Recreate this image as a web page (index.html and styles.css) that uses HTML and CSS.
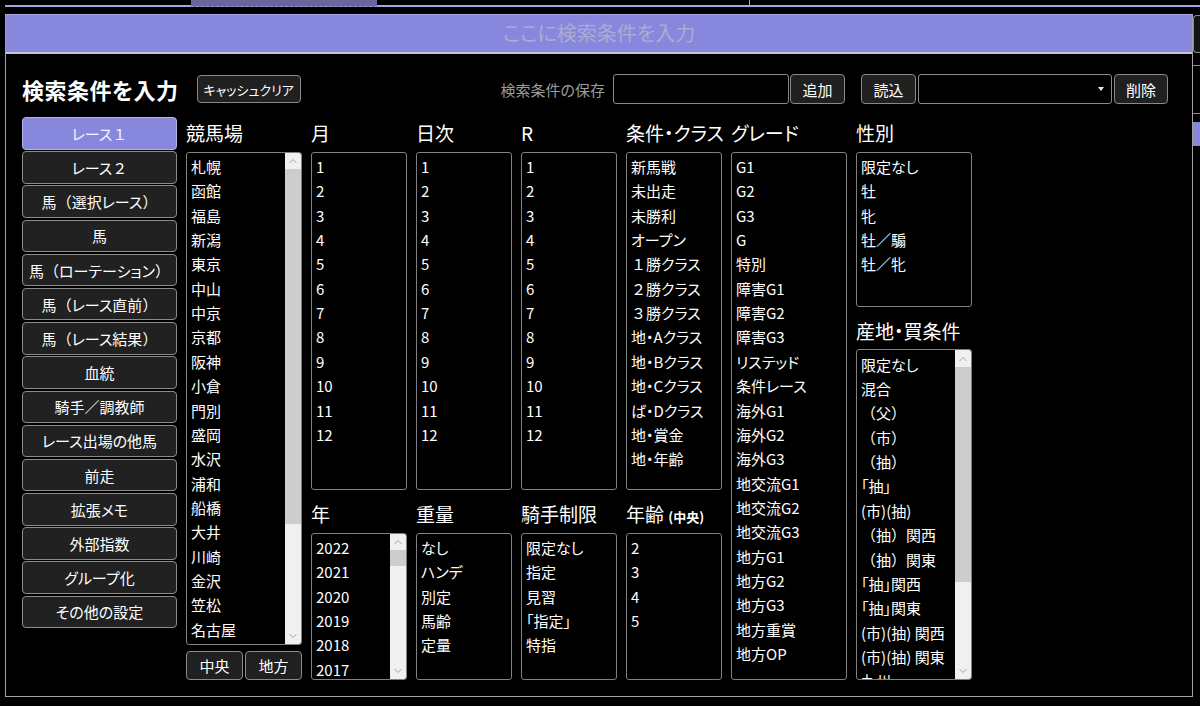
FILE: index.html
```html
<!DOCTYPE html>
<html lang="ja">
<head>
<meta charset="utf-8">
<title>検索条件を入力</title>
<link rel="stylesheet" href="styles.css">
</head>
<body>
<div class="topbar">
  <div class="tl tl-a"></div>
  <div class="tab"></div>
  <div class="tl tl-b"></div>
  <div class="tick"></div>
  <div class="tl tl-c"></div>
</div>
<div class="workspace">
  <div class="panel">
    <div class="searchbar">ここに検索条件を入力</div>
    <div class="toolbar">
      <h1 class="title">検索条件を入力</h1>
      <div class="btn btn-cache">キャッシュクリア</div>
      <div class="spacer"></div>
      <span class="save-label">検索条件の保存</span>
      <div class="input"></div>
      <div class="btn btn-add">追加</div>
      <div class="btn btn-load">読込</div>
      <div class="select"><span class="caret"></span></div>
      <div class="btn btn-del">削除</div>
    </div>
    <div class="content">
      <div class="nav">
        <div class="navbtn active">レース<span class="fw">１</span></div>
        <div class="navbtn">レース<span class="fw">２</span></div>
        <div class="navbtn">馬<span class="fw">（</span>選択レース<span class="fw">）</span></div>
        <div class="navbtn">馬</div>
        <div class="navbtn">馬<span class="fw">（</span>ローテーション<span class="fw">）</span></div>
        <div class="navbtn">馬<span class="fw">（</span>レース直前<span class="fw">）</span></div>
        <div class="navbtn">馬<span class="fw">（</span>レース結果<span class="fw">）</span></div>
        <div class="navbtn">血統</div>
        <div class="navbtn">騎手<span class="fw">／</span>調教師</div>
        <div class="navbtn">レース出場の他馬</div>
        <div class="navbtn">前走</div>
        <div class="navbtn">拡張メモ</div>
        <div class="navbtn">外部指数</div>
        <div class="navbtn">グループ化</div>
        <div class="navbtn">その他の設定</div>
      </div>

      <div class="col w116">
        <div class="lbl">競馬場</div>
        <div class="list h-venue">
          <div class="items">
            <div>札幌</div><div>函館</div><div>福島</div><div>新潟</div><div>東京</div>
            <div>中山</div><div>中京</div><div>京都</div><div>阪神</div><div>小倉</div>
            <div>門別</div><div>盛岡</div><div>水沢</div><div>浦和</div><div>船橋</div>
            <div>大井</div><div>川崎</div><div>金沢</div><div>笠松</div><div>名古屋</div>
          </div>
          <div class="sb">
            <div class="sb-arrow"><svg width="8" height="6" viewBox="0 0 8 6"><polyline points="0.5,5 4,1.5 7.5,5" fill="none" stroke="#a3a3a3" stroke-width="1"/></svg></div>
            <div class="sb-thumb th-venue"></div>
            <div class="sb-track"></div>
            <div class="sb-arrow"><svg width="8" height="6" viewBox="0 0 8 6"><polyline points="0.5,1 4,4.5 7.5,1" fill="none" stroke="#a3a3a3" stroke-width="1"/></svg></div>
          </div>
        </div>
        <div class="pair">
          <div class="btn pbtn">中央</div>
          <div class="btn pbtn">地方</div>
        </div>
      </div>

      <div class="col w96">
        <div class="lbl">月</div>
        <div class="list h-top">
          <div class="items">
            <div>1</div><div>2</div><div>3</div><div>4</div><div>5</div><div>6</div>
            <div>7</div><div>8</div><div>9</div><div>10</div><div>11</div><div>12</div>
          </div>
        </div>
        <div class="lbl lbl2">年</div>
        <div class="list h-bot">
          <div class="items">
            <div>2022</div><div>2021</div><div>2020</div><div>2019</div><div>2018</div><div>2017</div>
          </div>
          <div class="sb">
            <div class="sb-arrow"><svg width="8" height="6" viewBox="0 0 8 6"><polyline points="0.5,5 4,1.5 7.5,5" fill="none" stroke="#a3a3a3" stroke-width="1"/></svg></div>
            <div class="sb-thumb th-year"></div>
            <div class="sb-track"></div>
            <div class="sb-arrow"><svg width="8" height="6" viewBox="0 0 8 6"><polyline points="0.5,1 4,4.5 7.5,1" fill="none" stroke="#a3a3a3" stroke-width="1"/></svg></div>
          </div>
        </div>
      </div>

      <div class="col w96">
        <div class="lbl">日次</div>
        <div class="list h-top">
          <div class="items">
            <div>1</div><div>2</div><div>3</div><div>4</div><div>5</div><div>6</div>
            <div>7</div><div>8</div><div>9</div><div>10</div><div>11</div><div>12</div>
          </div>
        </div>
        <div class="lbl lbl2">重量</div>
        <div class="list h-bot">
          <div class="items">
            <div>なし</div><div>ハンデ</div><div>別定</div><div>馬齢</div><div>定量</div>
          </div>
        </div>
      </div>

      <div class="col w96">
        <div class="lbl">R</div>
        <div class="list h-top">
          <div class="items">
            <div>1</div><div>2</div><div>3</div><div>4</div><div>5</div><div>6</div>
            <div>7</div><div>8</div><div>9</div><div>10</div><div>11</div><div>12</div>
          </div>
        </div>
        <div class="lbl lbl2">騎手制限</div>
        <div class="list h-bot">
          <div class="items">
            <div>限定なし</div><div>指定</div><div>見習</div><div>「指定」</div><div>特指</div>
          </div>
        </div>
      </div>

      <div class="col w96">
        <div class="lbl">条件・クラス</div>
        <div class="list h-top">
          <div class="items">
            <div>新馬戦</div><div>未出走</div><div>未勝利</div><div>オープン</div>
            <div><span class="fw">１</span>勝クラス</div><div><span class="fw">２</span>勝クラス</div><div><span class="fw">３</span>勝クラス</div>
            <div>地・Aクラス</div><div>地・Bクラス</div><div>地・Cクラス</div><div>ば・Dクラス</div>
            <div>地・賞金</div><div>地・年齢</div>
          </div>
        </div>
        <div class="lbl lbl2">年齢 <small class="sub">(中央)</small></div>
        <div class="list h-bot">
          <div class="items">
            <div>2</div><div>3</div><div>4</div><div>5</div>
          </div>
        </div>
      </div>

      <div class="col w116">
        <div class="lbl">グレード</div>
        <div class="list h-grade">
          <div class="items">
            <div>G1</div><div>G2</div><div>G3</div><div>G</div><div>特別</div>
            <div>障害G1</div><div>障害G2</div><div>障害G3</div><div>リステッド</div><div>条件レース</div>
            <div>海外G1</div><div>海外G2</div><div>海外G3</div><div>地交流G1</div><div>地交流G2</div>
            <div>地交流G3</div><div>地方G1</div><div>地方G2</div><div>地方G3</div><div>地方重賞</div>
            <div>地方OP</div>
          </div>
        </div>
      </div>

      <div class="col w116">
        <div class="lbl">性別</div>
        <div class="list h-sex">
          <div class="items">
            <div>限定なし</div><div>牡</div><div>牝</div>
            <div>牡<span class="fw">／</span>騸</div><div>牡<span class="fw">／</span>牝</div>
          </div>
        </div>
        <div class="lbl lbl2">産地・買条件</div>
        <div class="list h-origin">
          <div class="items">
            <div>限定なし</div><div>混合</div>
            <div><span class="fw">（</span>父<span class="fw">）</span></div>
            <div><span class="fw">（</span>市<span class="fw">）</span></div>
            <div><span class="fw">（</span>抽<span class="fw">）</span></div>
            <div>「抽」</div>
            <div>(市)(抽)</div>
            <div><span class="fw">（</span>抽<span class="fw">）</span>関西</div>
            <div><span class="fw">（</span>抽<span class="fw">）</span>関東</div>
            <div>「抽」関西</div>
            <div>「抽」関東</div>
            <div>(市)(抽) 関西</div>
            <div>(市)(抽) 関東</div>
            <div>九州</div>
          </div>
          <div class="sb">
            <div class="sb-arrow"><svg width="8" height="6" viewBox="0 0 8 6"><polyline points="0.5,5 4,1.5 7.5,5" fill="none" stroke="#a3a3a3" stroke-width="1"/></svg></div>
            <div class="sb-thumb th-origin"></div>
            <div class="sb-track"></div>
            <div class="sb-arrow"><svg width="8" height="6" viewBox="0 0 8 6"><polyline points="0.5,1 4,4.5 7.5,1" fill="none" stroke="#a3a3a3" stroke-width="1"/></svg></div>
          </div>
        </div>
      </div>
    </div>
  </div>
  <div class="side">
    <div class="side-box"></div>
    <div class="side-line l1"></div>
    <div class="side-line l2"></div>
    <div class="side-block"></div>
  </div>
</div>
</body>
</html>
```

FILE: styles.css
```css
* { box-sizing: border-box; }
html, body { margin: 0; padding: 0; }
body {
  width: 1200px;
  height: 706px;
  overflow: hidden;
  background: #000;
  color: #fff;
  font-family: "Noto Sans CJK JP", "Noto Sans", sans-serif;
  font-feature-settings: "palt";
}
.fw { font-feature-settings: "palt" 0; }

/* top strip */
.topbar { display: flex; height: 14px; padding-left: 5px; }
.tl { height: 7px; border-bottom: 2px solid #a4a4e2; }
.tl-a { width: 186px; }
.tab { width: 186px; height: 7px; background: #67679b; border-bottom: 1px dashed #9c9cd0; }
.tl-b { width: 372px; }
.tick { width: 1px; height: 7px; background: #a4a4e2; }
.tl-c { flex: 1; }

.workspace { display: flex; height: 692px; }

.panel {
  margin-left: 5px;
  width: 1188px;
  height: 683px;
  border: 1px solid #a2a2a2;
  border-top-color: #a6a6e6;
  display: flex;
  flex-direction: column;
}

.searchbar {
  height: 39px;
  background: #8787dd;
  border-bottom: 2px solid #c6c6d2;
  color: #acacd0;
  font-size: 20px;
  line-height: 36px;
  text-align: center;
}

.toolbar {
  display: flex;
  align-items: center;
  height: 50px;
  padding: 20px 24px 0 16px;
}
.title {
  margin: 0;
  font-size: 22px;
  font-weight: 700;
  line-height: 30px;
  letter-spacing: 0.5px;
  white-space: nowrap;
}
.spacer { flex: 1; }

.btn {
  display: flex;
  align-items: center;
  justify-content: center;
  height: 30px;
  background: #202020;
  border: 1px solid #8a8a8a;
  border-radius: 4px;
  color: #fff;
  font-size: 15px;
  white-space: nowrap;
}
.btn-cache { width: 104px; height: 28px; margin-left: 18px; font-size: 13px; }
.save-label { color: #9c9c9c; font-size: 15px; margin-right: 8px; white-space: nowrap; }
.input { width: 176px; height: 30px; border: 1px solid #8a8a8a; border-radius: 3px; background: #000; }
.btn-add { width: 55px; margin-left: 1px; }
.btn-load { width: 55px; margin-left: 16px; }
.select {
  width: 194px;
  height: 30px;
  margin-left: 2px;
  border: 1px solid #8a8a8a;
  border-radius: 3px;
  background: #000;
  display: flex;
  align-items: center;
  justify-content: flex-end;
  padding-right: 7px;
}
.caret {
  width: 0; height: 0;
  border-left: 3.5px solid transparent;
  border-right: 3.5px solid transparent;
  border-top: 4px solid #e8e8e8;
}
.btn-del { width: 54px; margin-left: 2px; }

/* content */
.content {
  display: flex;
  align-items: flex-start;
  padding-left: 16px;
  margin-top: 13px;
}
.nav {
  width: 155px;
  display: flex;
  flex-direction: column;
  gap: 1.7px;
}
.navbtn {
  height: 32.5px;
  display: flex;
  align-items: center;
  justify-content: center;
  background: #212121;
  border: 1px solid #8c8c8c;
  border-radius: 4px;
  font-size: 15px;
  white-space: nowrap;
}
.navbtn.active {
  background: #8787dd;
  border-color: #b4b4ea;
  color: #f4f4ff;
}

.col { display: flex; flex-direction: column; margin-left: 9px; }
.w116 { width: 116px; }
.w96 { width: 96px; }

.lbl {
  height: 34.7px;
  font-size: 19px;
  line-height: 31px;
  white-space: nowrap;
}
.lbl2 { height: 42.7px; padding-top: 8px; }
.sub { font-size: 13px; font-weight: 700; }

.list {
  display: flex;
  border: 1px solid #808080;
  border-radius: 3px;
  background: #000;
  overflow: hidden;
}
.h-venue { height: 493.3px; }
.h-top { height: 338.3px; }
.h-bot { height: 147.3px; }
.h-grade { height: 528.3px; }
.h-sex { height: 155px; }
.h-origin { height: 330.7px; }

.items {
  flex: 1;
  min-width: 0;
  padding: 2.4px 0 0 4px;
  font-size: 15px;
  line-height: 24.35px;
  white-space: nowrap;
  overflow: hidden;
}

.sb {
  width: 16px;
  flex-shrink: 0;
  background: #f0f0f0;
  display: flex;
  flex-direction: column;
}
.sb-arrow {
  height: 16.5px;
  display: flex;
  align-items: center;
  justify-content: center;
  flex-shrink: 0;
}
.sb-thumb { background: #cdcdcd; flex-shrink: 0; }
.th-venue { height: 354.7px; }
.th-year { height: 15.7px; }
.th-origin { height: 215px; }
.sb-track { flex: 1; }

.pair { display: flex; gap: 2px; margin-top: 5.7px; }
.pbtn { flex: 1; height: 29.3px; }

/* background window edge */
.side { flex: 1; display: flex; flex-direction: column; }
.side-box {
  margin-top: 1px;
  height: 38px;
  border: 1px solid #8a8a8a;
  border-right: none;
  border-radius: 4px 0 0 4px;
  background: #141414;
}
.side-line { border-top: 1px solid #8a8a8a; }
.l1 { margin-top: 12px; }
.l2 { margin-top: 47px; }
.side-block { margin-top: 8px; height: 24px; background: #8787dd; }
```
